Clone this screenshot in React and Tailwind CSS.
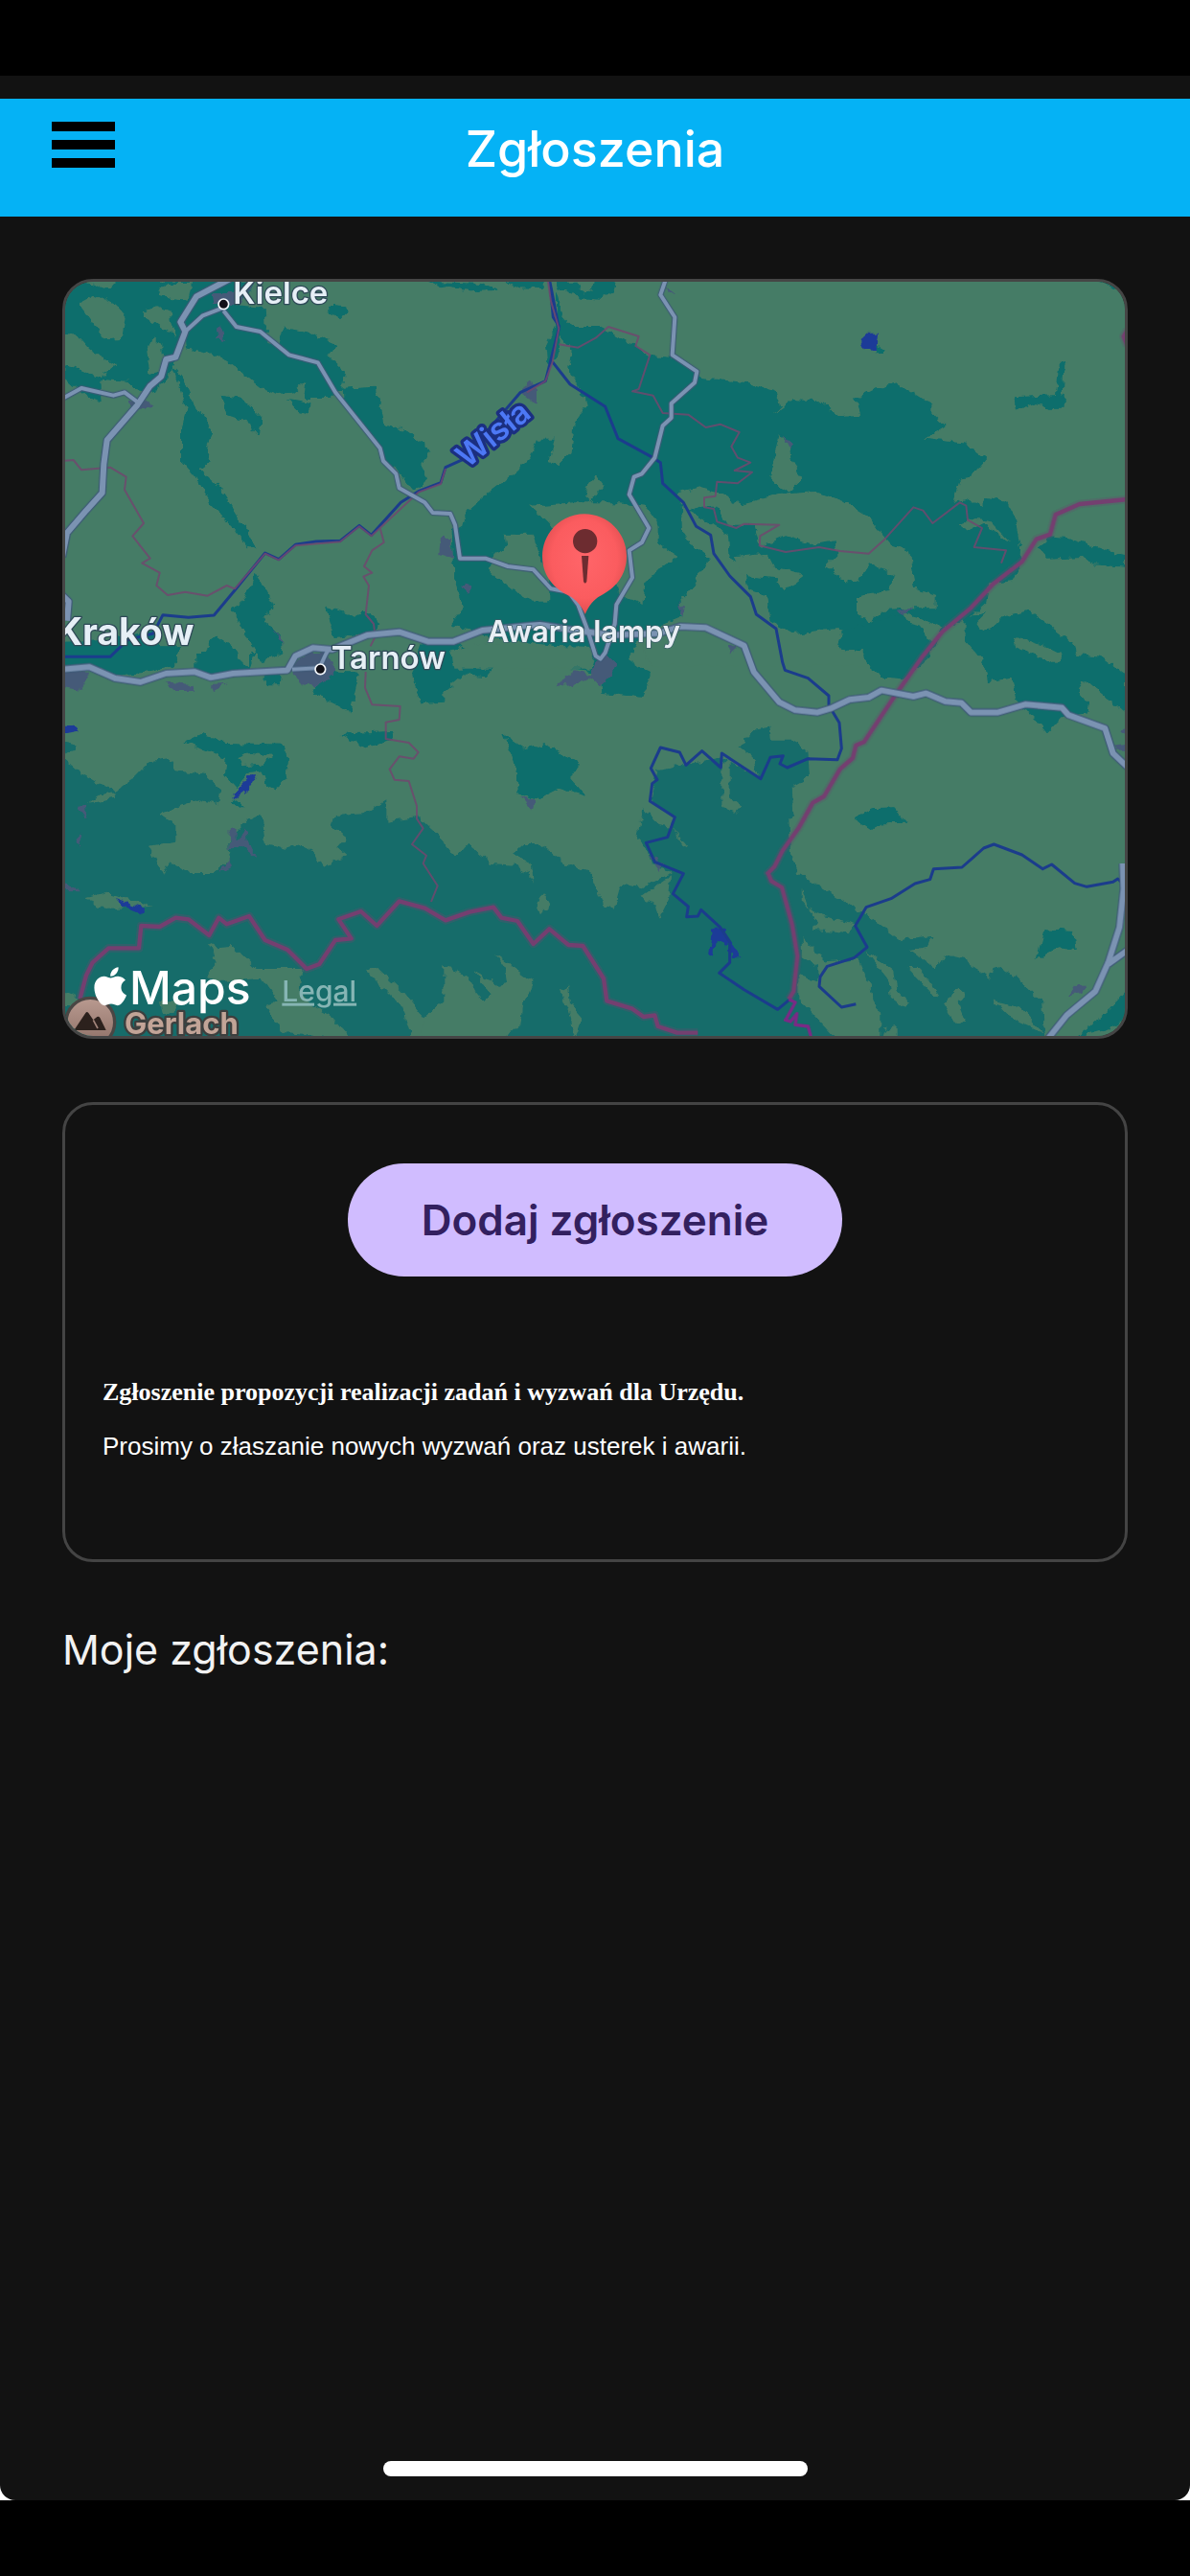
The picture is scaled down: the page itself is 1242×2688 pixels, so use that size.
import React from 'react';
import { FaApple } from 'react-icons/fa';

// Map geometry, one entry per tile. Points are relative to the tile origin.
const tiles = [
  {
    x: 0,
    y: 0,
    forest: [
      '400,190 405,250 510,272 545,295 640,372 690,390 740,385 778,350 772,402 850,402 885,375 995,368 1020,480 1100,510 1168,565 1140,610 1158,660 1112,692 1060,625 1018,600 1010,560 900,420 895,360 900,320 848,272 872,235 780,195 705,182 690,240 655,230 650,120 560,112 520,60 440,80 390,160',
      '15,35 620,35 590,90 440,90 400,180 385,260 330,360 290,385 190,370 135,345 140,415 90,400 20,340',
      '355,300 385,330 415,400 465,470 485,520 465,560 480,600 445,625 510,685 545,740 600,830 622,875 595,870 540,800 480,735 430,650 390,600 390,490 405,440 380,370',
      '512,395 580,405 640,470 628,520 600,480 530,455',
      '720,408 790,420 785,455 755,445',
      '850,110 900,115 905,140 885,150 850,135',
      '620,950 660,1010 680,1060 640,1090 700,1150 705,1200 640,1230 590,1150 545,1060 580,1040',
      '840,1058 930,1085 960,1070 1015,1110 990,1140 870,1155',
      '15,1170 150,1160 300,1130 320,1180 385,1180 370,1240 15,1245',
      '470,1180 495,1145 545,1180 600,1250 450,1250',
    ],
    land: [
      '75,105 120,80 180,110 215,150 205,215 150,220 120,180 75,120',
      '15,205 60,205 100,250 185,300 130,340 60,310 15,300',
      '265,130 310,115 350,130 355,170 370,210 320,180 270,150',
      '300,215 325,240 330,320 290,330 280,260',
      '340,45 420,45 410,95 350,90 315,80',
      '60,30 190,30 160,65',
      '140,345 220,350 250,380 200,400 145,375',
    ],
    urban: [
      '540,75 620,35 600,70 570,110 490,105 485,75',
      '510,170 525,225 495,220',
      '225,410 260,410 305,430 270,438 235,435',
      '670,1125 700,1150 708,1180',
    ],
    rivers: [
      '15,1213 165,1213 220,1160 300,1140 330,1082 410,1090 490,1083 555,1005 650,888 693,908 745,862 810,852 885,850 945,802 983,832 1075,730 1130,695 1200,668 1215,620 1270,595 1450,385 1528,350 1570,185 1540,30',
    ],
    provinces: [
      '15,600 50,597 75,628 165,620 215,650 210,690 270,795 235,835 290,905 265,920 320,950 310,990 345,1020 400,1010 470,1022 530,990 555,1000 650,890 693,910 745,865 885,853 945,805 983,835 1130,698 1200,672 1215,624',
      '1010,810 1022,855 985,880 960,930 985,950 958,962 975,990 965,1080 990,1110 995,1150 980,1180',
    ],
    highways: [
      '540,30 435,85 385,165 400,195 370,275 340,282 325,335 290,365 250,425 155,535 145,610 140,700 90,755 30,825 15,900',
      '15,1020 35,1040 30,1100',
    ],
    roads: [
      '400,195 455,145 520,120',
      '15,405 75,372 175,395 210,385 250,415',
      '520,130 560,180 635,195 725,268 815,292 870,385 1010,560 1020,600 1060,640 1070,685 1150,730 1175,762 1230,765 1245,800 1260,905 1340,905 1410,930 1490,940 1545,1000 1600,1010 1630,1050 1660,1130 1685,1210 1700,1220 1715,1200 1745,1110 1750,1050 1800,965 1790,880 1830,855 1852,810 1790,705 1805,650 1830,640 1870,590 1895,490 1922,465 1922,420 1995,355 2002,320 1925,268 1933,150 1888,80 1905,30',
    ],
  },
  {
    x: 1140,
    y: 0,
    forest: [
      '430,130 470,180 560,180 660,235 710,270 780,275 860,310 880,340 1020,355 1110,385 1125,430 1100,455 1160,412 1250,415 1305,460 1375,455 1360,405 1420,375 1490,358 1600,425 1600,450 1640,490 1575,530 1700,545 1770,595 1720,650 1690,655 1665,730 1705,720 1760,745 1760,712 1830,725 1860,780 1878,870 1875,930 1850,975 1780,985 1770,1040 1705,1100 1640,1120 1570,1170 1500,1200 1400,1200 1100,1150 815,1090 690,1140 640,1240 560,1200 420,1180 200,1150 90,1110 130,1060 100,960 95,820 130,800 140,760 220,690 300,630 340,590 360,530 420,530 400,600 430,610 470,570 480,480 515,430 510,400 460,310 470,250 430,200',
      '20,38 190,45 240,65 150,70 60,55',
      '260,35 380,35 380,60 300,58',
      '420,35 610,35 600,70 560,95 500,90 420,55',
      '420,60 440,150 430,260 400,310 390,240 420,180',
    ],
    land: [
      '800,700 870,685 930,700 1000,735 1120,705 1240,695 1320,725 1400,775 1470,860 1530,880 1545,1000 1610,1020 1610,1060 1545,1060 1450,1065 1410,1105 1365,1090 1365,1020 1465,1005 1475,960 1400,915 1370,980 1310,970 1265,930 1300,895 1295,850 1230,862 1140,835 1060,870 1040,800 960,800 925,740 870,740 830,760',
      '815,740 900,790 960,830 965,905 1010,930 1020,1000 1080,1020 1090,1100 1160,1140 1300,1125 1320,1130 1300,1190 1380,1195 1400,1240 720,1240 690,1180 815,1090 805,1040 850,990 900,905 850,870 820,830',
      '980,900 1080,890 1100,930 1185,950 1180,980 1135,1005 1110,970 1010,960',
      '1120,520 1150,550 1160,610 1195,655 1150,700 1120,680 1090,650 1110,560',
      '340,740 480,730 620,730 700,740 740,800 740,860 800,900 740,940 700,980 695,1050 620,1020 600,960 400,800',
      '260,830 350,830 365,880 400,960 400,1040 350,1040 280,1000 215,950 220,890 265,870',
      '545,648 570,680 530,730 510,710 520,680',
      '90,1195 160,1172 400,1178 550,1182 530,1250 100,1250',
      '485,35 540,35 530,75 510,75',
      '1510,1075 1560,1090 1620,1120 1620,1150 1580,1160 1570,1120 1530,1110',
    ],
    urban: [
      '60,840 90,840 100,905 55,890',
      '325,350 345,350 360,370 360,420 335,405 320,395',
      '130,985 158,990 140,1020',
      '1130,520 1165,545 1155,570',
      '800,1045 820,1060 818,1090',
      '765,50 795,75 770,70',
      '960,1180 990,1175 970,1210',
    ],
    rivers: [
      '410,290 465,360 575,430 615,530 725,590 748,605 755,670 820,730 860,805 905,832 915,890 965,960 1030,1025 1048,1080 1110,1125 1130,1230 1138,1255 1210,1280 1275,1335 1275,1365 1308,1420 1315,1500 1302,1535 1210,1532 1145,1560 1122,1548 1132,1523 1092,1528 1062,1595 940,1515 937,1560 878,1508 828,1552 808,1512 748,1497 718,1562 738,1598 722,1610 715,1665 793,1715 770,1778 703,1795 730,1855 820,1892 787,1955 835,1995 830,2027 865,2025 875,2005 935,2060 965,2105 965,2170 932,2203 1010,2255 1115,2317 1150,2288',
      '403,50 412,150 432,180',
    ],
    provinces: [
      '395,30 405,100 430,185 410,290 388,350 330,385',
      '430,235 490,245 545,215 585,180 680,210 670,240 715,268 680,375 660,382 725,395 755,450 835,455 890,495 935,485 995,510 970,555 990,590 1030,605 980,630 1035,635 990,670 925,665 920,710 885,715 885,745 915,750 925,790 985,810 1010,797 1120,800 1060,835 1058,865 1140,885 1245,870 1310,882 1400,890 1450,845 1540,745 1570,755 1600,795 1685,730 1705,740 1710,785 1755,810 1730,870 1830,880 1815,920',
    ],
  },
  {
    x: 2220,
    y: 0,
    forest: [
      '620,1090 620,1160 680,1230 690,1290 770,1280 785,1370 840,1400 880,1452 930,1400 1000,1390 1010,1360 975,1320 990,1280 1125,1390 1125,1270 1050,1215 970,1205 960,1170 820,1068 740,1090 710,1120 670,1135 655,1110 690,1075',
      '850,870 890,838 960,845 1060,880 1125,895 1125,932 1020,925 990,900 880,905',
      '775,400 935,392 935,437 880,437 850,420 780,440',
      '918,290 943,295 930,330 925,400 905,400 912,340',
      '220,1185 240,1130 330,1105 420,1080 490,1130 540,1160 510,1210 430,1285 370,1280 325,1250 300,1195',
      '340,235 375,260 335,262',
      '1045,36 1085,40 1125,80 1100,60',
    ],
    land: [
      '600,800 650,780 700,785 765,855 750,850 680,795 640,815',
      '770,1150 870,1180 930,1210 900,1240 850,1210 780,1180',
    ],
    water: ['320,200 348,200 345,225 335,255 305,250 293,225'],
    urban: ['405,1068 460,1055 430,1080'],
    borders: [
      '1130,720 980,735 905,768 888,830 845,845 800,915 710,985 640,1060 550,1135 490,1210 395,1345 305,1480 280,1490 270,1530 230,1565 180,1650 145,1670 100,1750 50,1820 25,1870 5,1890 15,1915 48,1935 80,2050 97,2150 85,2260 70,2285',
      '1130,190 1118,210 1130,240',
    ],
  },
  {
    x: 0,
    y: 1200,
    forest: [
      '15,0 380,0 370,40 290,60 200,70 100,45 15,40',
      '430,0 620,0 600,60 480,70 430,50',
      '645,65 700,65 695,100 655,100',
      '840,60 945,65 930,130 920,190 870,160 800,130',
      '1110,70 1140,160 1210,155 1210,120 1270,70 1340,75 1390,15 1240,-30 1140,-30',
      '885,255 1050,245 1055,270 960,298',
      '400,280 450,255 510,270 530,285 700,290 720,330 715,400 680,425 655,415 640,370 600,375 560,420 525,380 530,330 450,305',
      '545,470 560,460 590,490 570,490',
    ],
    south: [
      '15,280 60,290 60,305 30,310 15,330 60,370 130,410 185,430 240,390 290,340 350,330 370,370 460,380 510,430 505,475 440,460 360,490 320,505 370,540 370,590 285,605 330,700 350,655 420,690 490,690 540,650 535,590 600,520 640,500 650,600 720,615 760,600 800,620 830,670 910,635 880,610 905,580 860,545 870,510 960,505 1030,460 1030,530 1130,515 1200,580 1200,1220 15,1220',
    ],
    land: [
      '565,330 600,315 680,320 640,350 580,355',
      '560,0 600,0 600,45 580,35',
      '470,910 500,925 550,920 620,990 770,990 760,1060 790,1100 860,1140 920,1210 700,1190 650,1100 690,1090 640,1020 500,1030 465,1010 500,970',
      '960,990 1000,985 1080,1060 1150,1150 1190,1130 1250,1210 1110,1210 1080,1110',
      '95,765 150,750 300,795 200,800 120,800',
      '95,470 130,445 185,435 180,455',
      '15,1060 70,1080 60,1110 15,1110',
      '320,1090 380,1090 360,1130 330,1130',
    ],
    water: ['15,230 50,230 65,245 15,255', '600,385 625,385 600,425 555,460 550,440', '180,768 270,800 265,820 200,795'],
    urban: [
      '15,60 100,65 70,120 15,110',
      '730,50 780,0 840,0 870,60 810,105 765,100',
      '335,90 420,100 430,120 375,120',
      '480,100 530,95 490,120',
      '540,550 560,545 560,590 580,570 590,550 600,600 620,640 580,610 535,610',
      '510,690 540,645 550,670',
      '15,710 70,745 15,745',
      '65,485 90,482 95,520',
      '80,560 65,605 55,585',
    ],
    provinces: [
      '965,60 963,110 985,163 1073,168 1070,210 1028,218 1028,270 1100,282 1130,312 1115,332 1070,325 1040,365 1055,398 1100,402 1125,480 1125,520 1145,550 1110,600 1155,635 1145,660 1190,730 1170,780',
    ],
    borders: [
      '70,1085 90,1010 110,970 160,925 255,925 262,855 320,858 370,830 410,835 475,885 505,830 530,850 600,825 650,900 720,930 760,970 780,990 820,975 870,900 920,895 880,835 950,810 1000,855 1070,778 1150,800 1215,838 1290,812 1365,797 1390,830 1440,840 1490,912 1540,865 1600,915 1645,918 1710,1020 1720,1090 1800,1115 1835,1140 1870,1135 1880,1170 1940,1190 2005,1190',
    ],
    highways: [
      '15,52 100,45 180,80 260,92 340,65 430,60 480,78 550,65 720,55 745,10 800,-15 860,-10 970,-55 1070,-65 1160,-35 1240,-35 1330,-70 1510,-88 1620,-70 1740,-55 1880,-60 1950,-82 2030,-78 2150,-22 2180,60 2260,155 2310,180 2380,187 2420,175 2480,147 2540,140 2580,118 2680,137 2720,127 2780,153 2830,157 2860,187 2945,187 3030,162 3145,172 3165,195 3280,237 3305,315 3350,358',
    ],
    roads: ['735,52 820,48 840,5 850,-10'],
  },
  {
    x: 1140,
    y: 1200,
    forest: [
      '255,255 325,300 390,285 495,350 465,390 515,450 430,425 360,460 300,440 290,340',
      '470,50 500,-30 640,-30 650,20 720,70 690,140 565,125 560,60',
    ],
    south: [
      '40,560 110,640 145,600 220,660 290,665 340,700 350,720 345,660 285,630 320,600 370,600 450,660 530,690 570,790 605,800 625,725 690,735 750,705 790,690 720,660 700,600 675,580 695,485 740,540 785,550 790,515 715,465 740,365 830,350 945,330 1060,395 1040,330 995,295 1040,240 1090,230 1095,275 1160,275 1210,310 1215,390 1160,420 1165,510 1150,520 1155,630 1180,690 1390,820 1500,900 1600,885 1585,920 1530,930 1610,990 1640,945 1700,960 1780,1020 1790,985 1850,1005 1945,1100 1950,1220 0,1220 0,560',
    ],
    land: [
      '685,765 750,720 780,700 775,770 745,830 730,790',
      '380,757 400,790 375,820 358,790',
      '940,340 965,340 965,450 1000,480 985,500 940,480',
      '70,975 150,1020 170,1060 200,1095 215,1070 165,1000 240,1040 270,1035 265,1000 230,945 350,1030 320,1100 310,1170 250,1210 0,1210 10,1140 70,1090',
      '460,1045 465,1100 505,1145 485,1200 470,1195 465,1140 435,1060',
      '785,550 840,615 820,605',
    ],
    water: ['910,860 935,855 960,890 970,910 1000,955 970,955 960,915 920,905 915,950 900,945'],
    urban: [
      '425,100 480,55 530,70 540,30 580,5 610,35 590,75 560,105 530,80 455,105',
      '310,450 355,460 345,495',
      '710,635 755,655 750,690',
    ],
  },
  {
    x: 2220,
    y: 1200,
    forest: [
      '275,520 330,490 400,487 440,533 360,535 330,558',
      '870,865 960,870 968,930 910,925 845,960',
      '1125,1060 1125,1150 1060,1180 970,1205 1080,1110',
    ],
    land: [
      '110,740 130,800 170,820 280,850 260,880 150,870 160,840 110,780',
      '110,890 190,970 290,960 330,1060 355,1130 355,1210 220,1210 100,1080 100,1010 160,1030 160,980 110,950',
      '310,930 400,1000 410,1060 450,1100 430,1110 390,1080 380,1020',
      '445,990 480,990 540,1070 530,1080',
      '600,1050 625,1070 600,1100 625,1160 590,1160 555,1100',
      '710,1090 800,1115 865,1190 760,1140',
      '370,1180 410,1170 410,1210 360,1210',
    ],
    urban: ['945,1075 970,1040 1005,1040 990,1065', '1090,290 1125,285 1125,305 1095,305', '1110,245 1125,240 1125,260'],
    rivers: [
      '280,1100 235,1110 165,1045 168,1015 190,982 275,955 315,922 278,855 312,797 390,770 465,723 512,710 523,677 612,672 680,612 712,600 800,633 865,677 893,663 965,722 1003,733 1085,718 1100,708 1118,725',
    ],
    violet: ['70,1085 90,1095 60,1150 75,1155 95,1130 90,1165 130,1170 140,1205'],
    highways: ['1115,660 1118,740 1105,860 1070,970 1030,1060 940,1135 880,1210', '1070,975 1130,932'],
  },
];

const Areas = ({ kind, fill }) => (
  <g fill={fill}>
    {tiles.map((tile) => (
      <g key={`${tile.x}-${tile.y}`} transform={`translate(${tile.x} ${tile.y})`}>
        {(tile[kind] || []).map((points) => (
          <polygon key={points} points={points} />
        ))}
      </g>
    ))}
  </g>
);

const Lines = ({ kind, stroke, width, opacity = 1 }) => (
  <g fill="none" stroke={stroke} strokeWidth={width} strokeLinejoin="round" opacity={opacity}>
    {tiles.map((tile) => (
      <g key={`${tile.x}-${tile.y}`} transform={`translate(${tile.x} ${tile.y})`}>
        {(tile[kind] || []).map((points) => (
          <polyline key={points} points={points} />
        ))}
      </g>
    ))}
  </g>
);

const CityDot = ({ cx, cy }) => (
  <circle cx={cx} cy={cy} r="16" fill="#111118" stroke="#f2f6fa" strokeWidth="5" />
);

const MapView = () => (
  <svg
    viewBox="24 39 3318 2361"
    className="block h-auto w-full bg-[#457b66] font-[Inter,sans-serif]"
    role="img"
    aria-label="Mapa"
  >
    <defs>
      <filter id="rough" x="0" y="0" width="100%" height="100%">
        <feTurbulence type="fractalNoise" baseFrequency="0.04" numOctaves="2" seed="4" />
        <feDisplacementMap in="SourceGraphic" scale="26" xChannelSelector="R" yChannelSelector="G" />
      </filter>
      <radialGradient id="pin" cx="0.5" cy="0.45" r="0.6">
        <stop offset="0" stopColor="#ff6569" />
        <stop offset="0.65" stopColor="#fb5c5f" />
        <stop offset="1" stopColor="#d84a4c" />
      </radialGradient>
      <linearGradient id="peak" x1="0" y1="0" x2="0" y2="1">
        <stop offset="0" stopColor="#b99a90" />
        <stop offset="1" stopColor="#8d6f66" />
      </linearGradient>
    </defs>

    <g filter="url(#rough)">
      <rect x="-20" y="-20" width="3450" height="2500" fill="#457b66" />
      <Areas kind="south" fill="#136c6a" />
      <Areas kind="forest" fill="#086e6c" />
      <Areas kind="land" fill="#457b66" />
      <Areas kind="urban" fill="#455a78" />
      <Areas kind="water" fill="#1e3a98" />
    </g>

    <Lines kind="rivers" stroke="#1b3c8c" width={9} />
    <Lines kind="provinces" stroke="#71486f" width={6} opacity={0.85} />
    <Lines kind="borders" stroke="#6b4a70" width={26} opacity={0.3} />
    <Lines kind="borders" stroke="#743f70" width={13} />
    <Lines kind="violet" stroke="#7a2a85" width={10} />
    <Lines kind="roads" stroke="#3f5a78" width={18} />
    <Lines kind="highways" stroke="#3f5a78" width={25} />
    <Lines kind="roads" stroke="#7b93b2" width={12} />
    <Lines kind="highways" stroke="#7b93b2" width={18} />

    <CityDot cx={520} cy={109} />
    <CityDot cx={823} cy={1252} />

    <g fill="#e6eff6" stroke="#2f4a58" strokeWidth="8" paintOrder="stroke" strokeLinejoin="round">
      <text x="550" y="107" fontSize="99" fontWeight="600">Kielce</text>
      <text x="427" y="1175" fontSize="117" fontWeight="700" textAnchor="end">Kraków</text>
      <text x="857" y="1250" fontSize="99" fontWeight="600">Tarnów</text>
    </g>
    <text
      transform="translate(1385 542) rotate(-39)"
      fontSize="99"
      fontWeight="600"
      textAnchor="middle"
      fill="#4d78f5"
      stroke="#1b2f80"
      strokeWidth="20"
      paintOrder="stroke"
      strokeLinejoin="round"
    >
      Wisła
    </text>

    <path
      d="M1650 766 C1723 766 1782 825 1782 898 C1782 960 1745 1000 1700 1022 C1678 1034 1664 1052 1652 1080 C1640 1052 1624 1034 1602 1022 C1555 1000 1518 960 1518 898 C1518 825 1577 766 1650 766 Z"
      fill="url(#pin)"
    />
    <circle cx="1652" cy="851" r="38" fill="#6d2c30" />
    <path d="M1641 897 H1663 L1657 977 Q1652 988 1647 977 Z" fill="#6d2c30" />
    <text
      x="1648"
      y="1168"
      fontSize="93"
      fontWeight="600"
      textAnchor="middle"
      fill="#e9eff5"
      stroke="#3c5f68"
      strokeWidth="5"
      paintOrder="stroke"
    >
      Awaria lampy
    </text>

    <circle cx="103" cy="2357" r="76" fill="url(#peak)" stroke="#4a4644" strokeWidth="10" />
    <path d="M52 2382 L88 2328 Q92 2322 97 2328 L112 2350 L124 2340 Q129 2337 133 2343 L152 2382 Z" fill="#2c211d" />
    <path d="M112 2350 L126 2376" stroke="#a3857b" strokeWidth="5" />
    <FaApple x="97" y="2176" size="137" color="#ffffff" />
    <text x="225" y="2302" fontSize="144" fontWeight="500" fill="#ffffff">Maps</text>
    <a href="#legal">
      <text x="703" y="2291" fontSize="90" fontWeight="500" fill="#86b5b4" textDecoration="underline">Legal</text>
    </a>
    <text
      x="210"
      y="2393"
      fontSize="93"
      fontWeight="700"
      fill="#c2a497"
      stroke="#3d3f3e"
      strokeWidth="14"
      paintOrder="stroke"
      strokeLinejoin="round"
    >
      Gerlach
    </text>
  </svg>
);

const Header = () => (
  <header className="grid h-[123px] grid-cols-[1fr_auto_1fr] items-start bg-[#05b2f5] px-[54px] pt-6">
    <button type="button" aria-label="Menu" className="flex w-[66px] flex-col gap-[9px]">
      <span className="h-[10px] bg-black" />
      <span className="h-[10px] bg-black" />
      <span className="h-[10px] bg-black" />
    </button>
    <h1 className="text-[52px] leading-[58px] font-medium text-white">Zgłoszenia</h1>
  </header>
);

const App = () => {
  return (
    <div className="flex min-h-screen flex-col bg-black font-[Inter,sans-serif]">
      <div className="h-[79px] shrink-0" />
      <div className="flex flex-1 flex-col bg-white">
        <div className="flex flex-1 flex-col rounded-b-2xl bg-[#121212] pt-6">
          <Header />

          <main className="flex flex-col px-[65px] pt-[65px]">
            <section className="overflow-hidden rounded-[32px] border-3 border-[#454545]">
              <MapView />
            </section>

            <section className="mt-[66px] flex flex-col rounded-[32px] border-3 border-[#444444] px-[39px] pt-[61px] pb-[102px]">
              <button
                type="button"
                className="self-center rounded-full bg-[#d0bcff] px-[77px] py-[31px] text-[44px] leading-[56px] font-semibold text-[#33205f]"
              >
                Dodaj zgłoszenie
              </button>
              <h2 className="mt-[105px] font-['Liberation_Serif',serif] text-[26px] leading-8 font-bold text-white">
                Zgłoszenie propozycji realizacji zadań i wyzwań dla Urzędu.
              </h2>
              <p className="mt-6 font-['Liberation_Sans',sans-serif] text-[26px] leading-8 text-white">
                Prosimy o złaszanie nowych wyzwań oraz usterek i awarii.
              </p>
            </section>

            <h2 className="mt-[63px] text-[43px] leading-[56px] text-[#f2f2f2]">Moje zgłoszenia:</h2>
          </main>

          <div className="mt-auto mb-[25px] h-4 w-[443px] self-center rounded-full bg-white" />
        </div>
      </div>
      <div className="h-[79px] shrink-0" />
    </div>
  );
};

export default App;
